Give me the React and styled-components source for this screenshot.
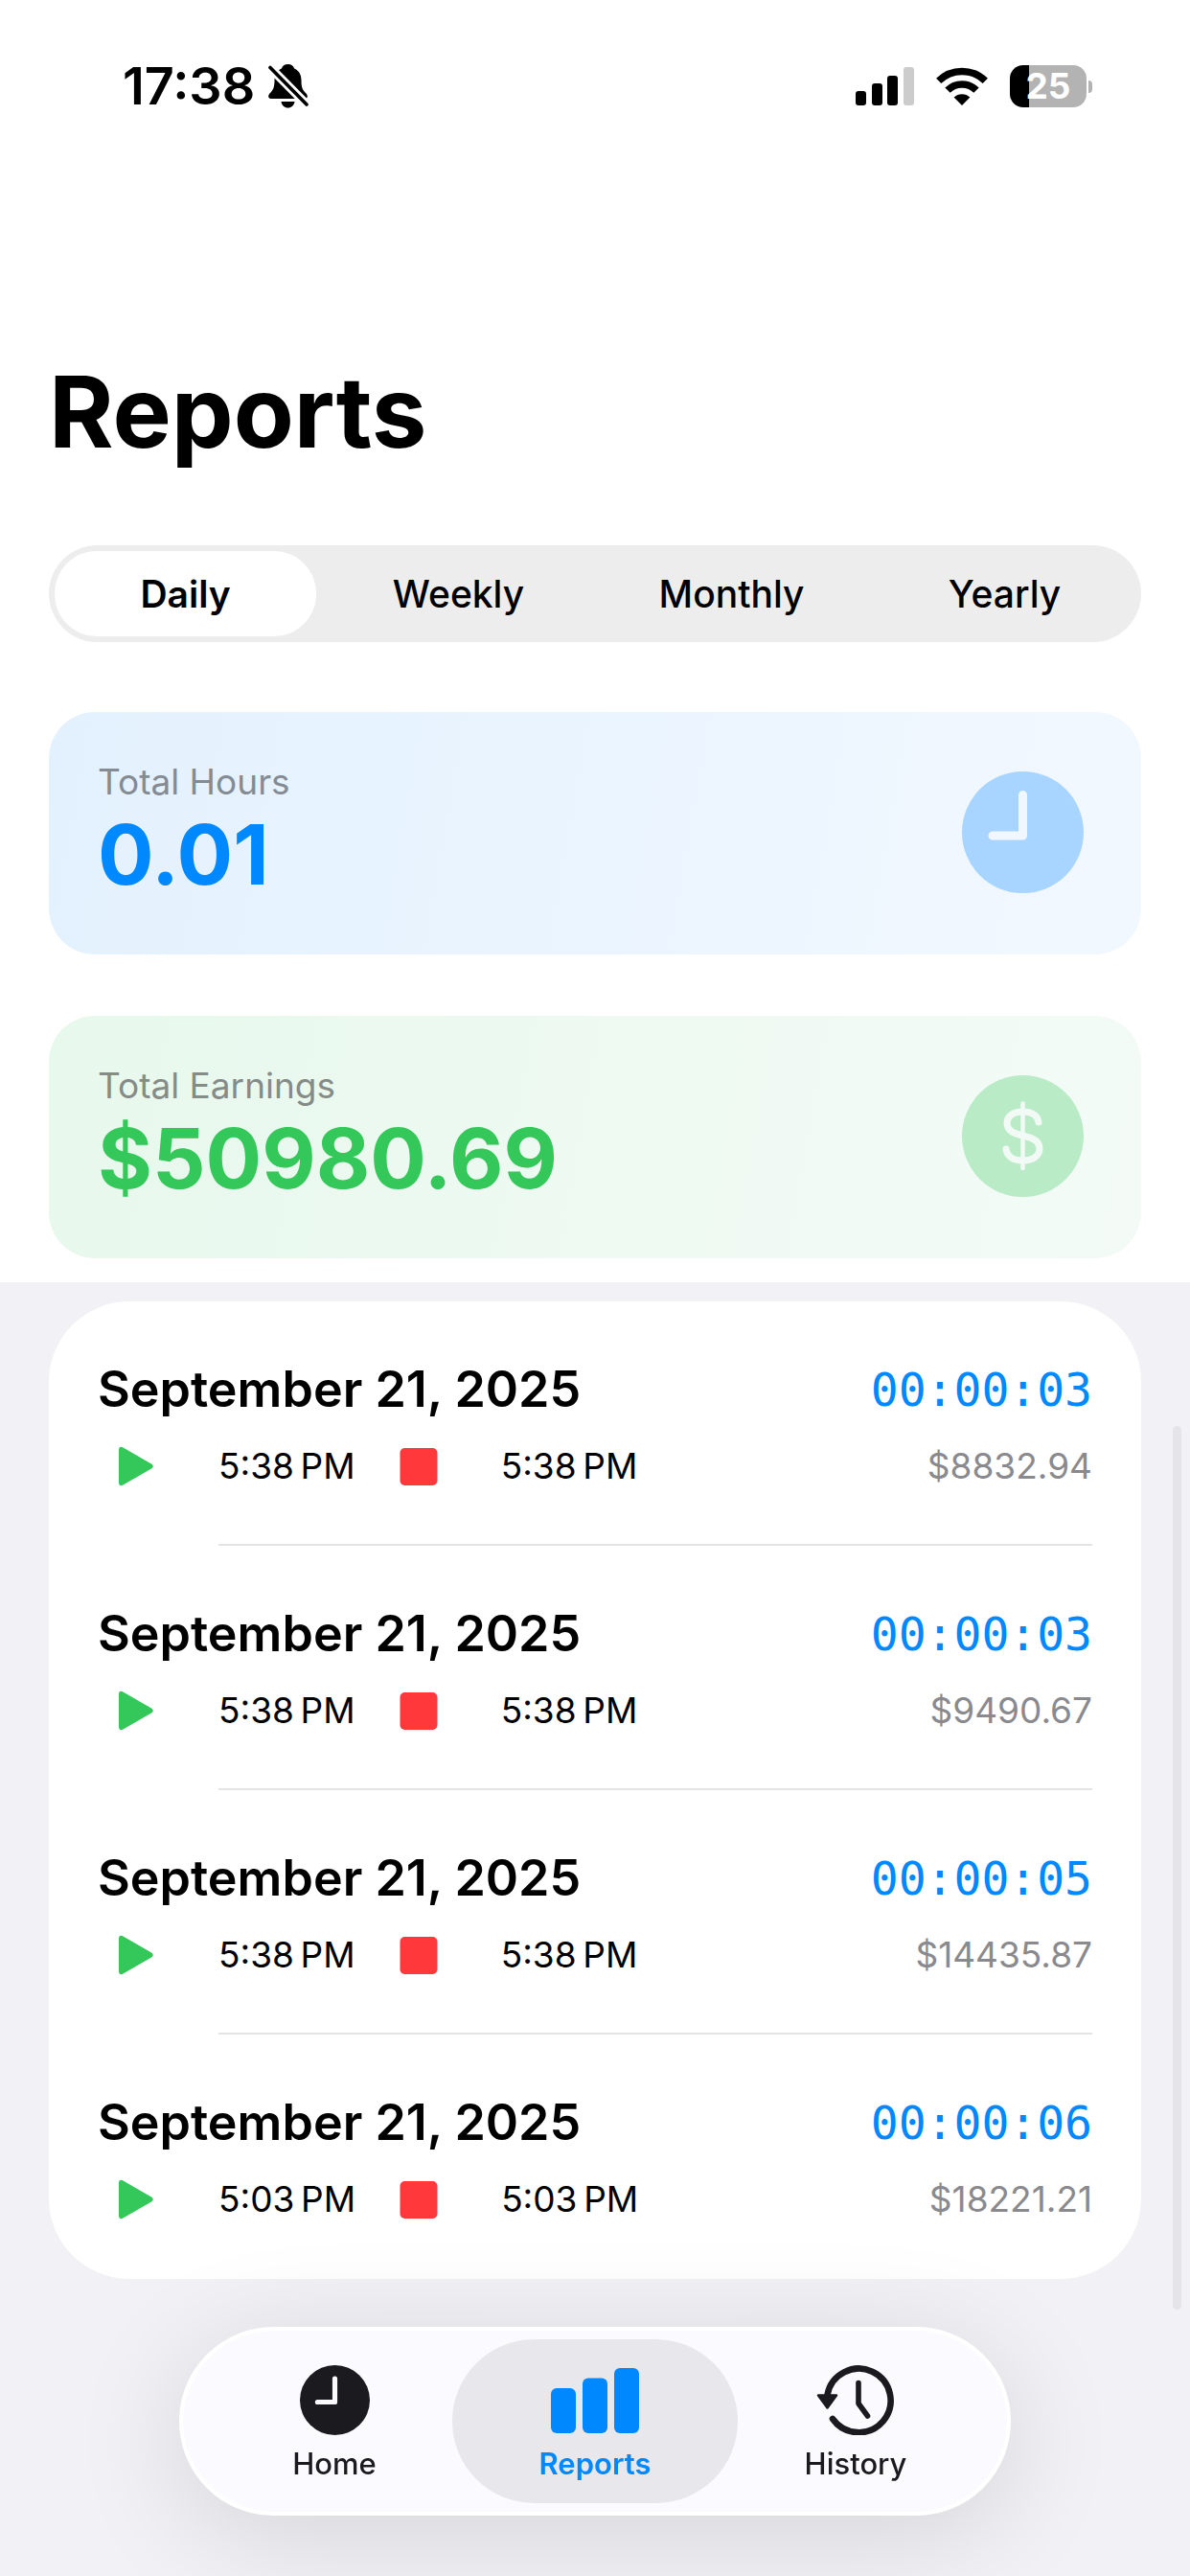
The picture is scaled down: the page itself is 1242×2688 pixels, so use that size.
import React, { useState } from 'react';
import styled, { createGlobalStyle, css } from 'styled-components';

const periods = ['Daily', 'Weekly', 'Monthly', 'Yearly'];

const sessions = [
	{ id: 1, date: 'September 21, 2025', start: '5:38\u202fPM', end: '5:38\u202fPM', duration: '00:00:03', amount: '$8832.94' },
	{ id: 2, date: 'September 21, 2025', start: '5:38\u202fPM', end: '5:38\u202fPM', duration: '00:00:03', amount: '$9490.67' },
	{ id: 3, date: 'September 21, 2025', start: '5:38\u202fPM', end: '5:38\u202fPM', duration: '00:00:05', amount: '$14435.87' },
	{ id: 4, date: 'September 21, 2025', start: '5:03\u202fPM', end: '5:03\u202fPM', duration: '00:00:06', amount: '$18221.21' },
];

function BellOffIcon() {
	return (
		<svg width="42" height="46" viewBox="0 0 42 46" aria-hidden="true">
			<path d="M20.500 0C17 0 14.600 2 13.800 4.600C8.500 7 6.500 11.500 6.500 17C6.500 25 4.500 27.500 1.500 30.500C-.8 33 0 36 3 36H38C41 36 41.800 33 39.500 30.500C36 27 34.500 25 34.500 17C34.500 11.500 32.500 7 27.200 4.600C26.400 2 24 0 20.500 0Z" />
			<path d="M13.500 39H27.500C27 43 24 45.500 20.500 45.500C17 45.500 14 43 13.500 39Z" />
			<path d="M2 3.500L40 42" stroke="#fff" strokeWidth="9" />
			<path d="M2 3.500L40 42" stroke="#000" strokeWidth="3.600" strokeLinecap="round" />
		</svg>
	);
}

function SignalIcon() {
	return (
		<svg width="61" height="40" viewBox="0 0 61 40" aria-hidden="true">
			<rect x="0" y="25" width="11" height="15" rx="3" />
			<rect x="17" y="17" width="11" height="23" rx="3" />
			<rect x="33" y="9" width="11" height="31" rx="3" />
			<rect x="50" y="0" width="11" height="40" rx="3" fill="#ccc" />
		</svg>
	);
}

function WifiIcon() {
	return (
		<svg width="54" height="40" viewBox="0 0 54 40" aria-hidden="true">
			<g fill="none" stroke="#000" strokeWidth="7.500">
				<path d="M2.700 14.400A34.500 34.500 0 0 1 51.300 14.400" />
				<path d="M12 24.200A21 21 0 0 1 42 24.200" />
			</g>
			<path d="M27 40L18.600 31.600A12 12 0 0 1 35.400 31.600Z" />
		</svg>
	);
}

function ClockFillIcon({ size, hands }) {
	return (
		<svg width={size} height={size} viewBox="0 0 127 127" aria-hidden="true">
			<circle cx="63.500" cy="63.500" r="63.500" fill="currentColor" />
			<path d="M63.500 24.500V67H32" fill="none" stroke={hands} strokeWidth="9" strokeLinecap="round" strokeLinejoin="round" />
		</svg>
	);
}

function DollarIcon() {
	return (
		<svg width="127" height="127" viewBox="0 0 127 127" aria-hidden="true">
			<circle cx="63.500" cy="63.500" r="63.500" fill="currentColor" />
			<g fill="none" stroke="#f2faf5" strokeLinecap="round">
				<path d="M63.500 29.500V97" strokeWidth="4.500" />
				<path d="M80 49C79 42 73 38 63.500 38C53 38 47 43 47 50C47 57.500 53 60.500 63.500 63C75 65.700 81 69 81 76.500C81 84 74 89 63.500 89C53.500 89 47 84.500 46 77" strokeWidth="7" />
			</g>
		</svg>
	);
}

function PlayIcon() {
	return (
		<svg width="36" height="42" viewBox="0 0 36 42" fill="#34c759" aria-hidden="true">
			<path d="M0 4C0 1 2 0 4.500 1.500L34 18.500C36.300 20 36.300 22 34 23.500L4.500 40.500C2 42 0 41 0 38Z" />
		</svg>
	);
}

function StopIcon() {
	return (
		<svg width="39" height="39" viewBox="0 0 39 39" fill="#ff383c" aria-hidden="true">
			<rect width="39" height="39" rx="5" />
		</svg>
	);
}

function BarsIcon() {
	return (
		<svg width="92" height="73" viewBox="0 0 92 73" fill="currentColor" aria-hidden="true">
			<rect x="0" y="24" width="26" height="47" rx="6" />
			<rect x="33" y="13.500" width="26" height="57.500" rx="6" />
			<rect x="66" y="3" width="26" height="68" rx="6" />
		</svg>
	);
}

function HistoryIcon() {
	return (
		<svg width="82" height="73" viewBox="0 0 82 73" fill="none" stroke="currentColor" strokeLinecap="round" strokeLinejoin="round" aria-hidden="true">
			<path d="M11.500 31A33.300 33.300 0 1 1 17 56" strokeWidth="6.600" />
			<path d="M44 18.500V40L53.500 53" strokeWidth="5.600" />
			<path d="M2 31.500H21L11.500 44.500Z" fill="currentColor" strokeWidth="2.500" />
		</svg>
	);
}

function App() {
	const [period, setPeriod] = useState('Daily');

	return (
		<>
			<GlobalStyle />
			<Page>
				<StatusBar>
					<Clock>17:38 <BellOffIcon /></Clock>
					<Indicators>
						<SignalIcon />
						<WifiIcon />
						<Battery><BatteryLevel>25</BatteryLevel></Battery>
					</Indicators>
				</StatusBar>

				<Summary>
					<Title>Reports</Title>
					<Segments>
						{periods.map((item) => (
							<Segment
								key={item}
								type="button"
								aria-pressed={item === period}
								$active={item === period}
								onClick={() => setPeriod(item)}
							>
								{item}
							</Segment>
						))}
					</Segments>
					<Cards>
						<Card $from="#e3f1fe" $to="#f2f8ff">
							<div>
								<CardLabel $color="#858b93">Total Hours</CardLabel>
								<CardValue $color="#0088ff">0.01</CardValue>
							</div>
							<CardIcon $color="#a8d5ff"><ClockFillIcon size={127} hands="#f0f7ff" /></CardIcon>
						</Card>
						<Card $from="#e7f8ec" $to="#f4fbf7">
							<div>
								<CardLabel $color="#858c88">Total Earnings</CardLabel>
								<CardValue $color="#34c759">$50980.69</CardValue>
							</div>
							<CardIcon $color="#b9ebc7"><DollarIcon /></CardIcon>
						</Card>
					</Cards>
				</Summary>

				<Sessions>
					<SessionList>
						{sessions.map((session) => (
							<SessionItem key={session.id}>
								<SessionLine>
									<SessionDate>{session.date}</SessionDate>
									<Duration>{session.duration}</Duration>
								</SessionLine>
								<SessionLine>
									<Times>
										<Time><PlayIcon />{session.start}</Time>
										<Time><StopIcon />{session.end}</Time>
									</Times>
									<Amount>{session.amount}</Amount>
								</SessionLine>
							</SessionItem>
						))}
					</SessionList>
					<ScrollThumb />
				</Sessions>

				<TabBar>
					<Tab href="#home"><ClockFillIcon size={73} hands="#fbfbff" />Home</Tab>
					<Tab href="#reports" $active aria-current="page"><BarsIcon />Reports</Tab>
					<Tab href="#history"><HistoryIcon />History</Tab>
				</TabBar>
			</Page>
		</>
	);
}

export default App;

const GlobalStyle = createGlobalStyle`
	* {
		box-sizing: border-box;
		margin: 0;
		padding: 0;
	}
	body {
		background-color: #fff;
		color: #000;
		font-family: Inter, "Liberation Sans", sans-serif;
	}
	button {
		border: none;
		font-family: inherit;
		cursor: pointer;
	}
	svg {
		flex-shrink: 0;
	}
`

const Page = styled.div`
	min-height: 100vh;
	display: flex;
	flex-direction: column;
`

const StatusBar = styled.header`
	display: flex;
	justify-content: space-between;
	align-items: center;
	padding: 58px 102px 0 128px;
`

const Clock = styled.div`
	display: flex;
	align-items: center;
	gap: 14px;
	font-size: 54px;
	line-height: 64px;
	font-weight: 600;
`

const Indicators = styled.div`
	display: flex;
	align-items: center;
	gap: 23px;
`

const Battery = styled.div`
	display: flex;
	align-items: center;
	gap: 2px;

	&::after {
		content: "";
		width: 4px;
		height: 13px;
		border-radius: 0 6px 6px 0;
		background-color: #b3b3b3;
	}
`

const BatteryLevel = styled.span`
	width: 80px;
	border-radius: 14px;
	background: linear-gradient(to right, #000 25%, #b3b3b3 25%);
	color: #fff;
	font-size: 37px;
	line-height: 44px;
	font-weight: 700;
	text-align: center;
`

const Summary = styled.section`
	padding: 248px 51px 25px;
`

const Title = styled.h1`
	font-size: 103px;
	line-height: 120px;
	font-weight: 700;
`

const Segments = styled.div`
	display: grid;
	grid-template-columns: repeat(4, 1fr);
	gap: 12px;
	margin-top: 79px;
	padding: 6px;
	border-radius: 51px;
	background-color: #ededed;
`

const Segment = styled.button`
	border-radius: 44px;
	background-color: ${({ $active }) => ($active ? '#fff' : 'transparent')};
	color: #000;
	font-size: 39px;
	line-height: 89px;
	font-weight: ${({ $active }) => ($active ? 600 : 500)};
`

const Cards = styled.div`
	display: flex;
	flex-direction: column;
	gap: 64px;
	margin-top: 73px;
`

const Card = styled.article`
	display: flex;
	justify-content: space-between;
	align-items: center;
	padding: 49px 60px 52px 51px;
	border-radius: 48px;
	background: linear-gradient(100deg, ${({ $from }) => $from}, ${({ $to }) => $to});
`

const CardLabel = styled.h2`
	color: ${({ $color }) => $color};
	font-size: 37px;
	line-height: 48px;
	font-weight: 400;
`

const CardValue = styled.p`
	color: ${({ $color }) => $color};
	font-size: 87px;
	line-height: 104px;
	font-weight: 700;
`

const CardIcon = styled.span`
	display: flex;
	color: ${({ $color }) => $color};
`

const Sessions = styled.section`
	position: relative;
	flex-grow: 1;
	padding: 20px 51px 310px;
	background-color: #f1f1f6;
`

const SessionList = styled.ul`
	border-radius: 84px;
	background-color: #fff;
	list-style: none;
`

const SessionItem = styled.li`
	display: flex;
	flex-direction: column;
	gap: 24px;
	padding: 60px 51px 0;

	&::after {
		content: "";
		height: 2px;
		margin: 33px 0 0 126px;
		background-color: #e4e4e6;
	}
	&:last-child::after {
		background-color: transparent;
	}
`

const SessionLine = styled.div`
	display: flex;
	justify-content: space-between;
	align-items: center;
`

const SessionDate = styled.h3`
	font-size: 52px;
	line-height: 64px;
	font-weight: 600;
`

const Duration = styled.span`
	color: #0088ff;
	font-family: "DejaVu Sans Mono", "Liberation Mono", monospace;
	font-size: 48px;
	line-height: 64px;
`

const Times = styled.div`
	display: flex;
	gap: 26px;
`

const smallText = css`
	font-size: 37px;
	line-height: 48px;
`

const Time = styled.span`
	display: flex;
	align-items: center;
	gap: 46px;
	${smallText}

	svg {
		width: 80px;
	}
`

const Amount = styled.span`
	color: #8a8a8e;
	${smallText}
`

const ScrollThumb = styled.div`
	position: absolute;
	top: 150px;
	right: 9px;
	width: 9px;
	height: 922px;
	border-radius: 5px;
	background-color: #e4e4e9;
`

const TabBar = styled.nav`
	position: fixed;
	bottom: 63px;
	left: 50%;
	transform: translateX(-50%);
	display: flex;
	padding: 9px;
	border: 4px solid #fff;
	border-radius: 99px;
	background-color: #fbfbff;
	box-shadow: 0 20px 120px rgba(0, 0, 0, 0.12);
`

const Tab = styled.a`
	display: flex;
	flex-direction: column;
	align-items: center;
	gap: 12px;
	width: 298px;
	padding: 27px 0 23px;
	border-radius: 86px;
	background-color: ${({ $active }) => ($active ? '#e8e8ec' : 'transparent')};
	color: ${({ $active }) => ($active ? '#0088ff' : '#1a1a1f')};
	font-size: 31px;
	line-height: 36px;
	font-weight: ${({ $active }) => ($active ? 600 : 500)};
	text-decoration: none;

	& + & {
		margin-left: -26px;
	}
`
